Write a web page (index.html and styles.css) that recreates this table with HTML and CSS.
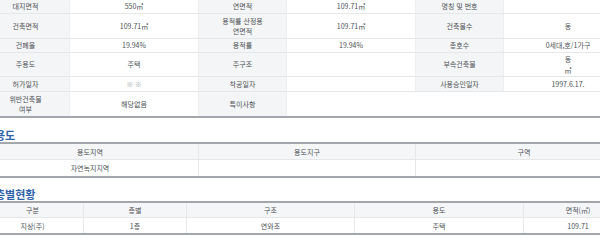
FILE: index.html
```html
<!DOCTYPE html>
<html lang="ko">
<head>
<meta charset="utf-8">
<link rel="stylesheet" href="styles.css">
</head>
<body>
<div class="page">
  <div class="info">
    <div class="th">대지면적</div><div class="td">550㎡</div><div class="th">연면적</div><div class="td">109.71㎡</div><div class="th">명칭 및 번호</div><div class="td"></div>
    <div class="th">건축면적</div><div class="td">109.71㎡</div><div class="th">용적률 산정용<br>연면적</div><div class="td">109.71㎡</div><div class="th">건축물수</div><div class="td">동</div>
    <div class="th">건폐율</div><div class="td">19.94%</div><div class="th">용적률</div><div class="td">19.94%</div><div class="th">총호수</div><div class="td">0세대,호/1가구</div>
    <div class="th">주용도</div><div class="td">주택</div><div class="th">주구조</div><div class="td"></div><div class="th">부속건축물</div><div class="td">동<br>㎡</div>
    <div class="th">허가일자</div><div class="td muted">※ ※</div><div class="th">착공일자</div><div class="td"></div><div class="th">사용승인일자</div><div class="td">1997.6.17.</div>
    <div class="th last">위반건축물<br>여부</div><div class="td last">해당없음</div><div class="th last">특이사항</div><div class="td last span3"></div>
  </div>

  <h2 class="title title-use">용도</h2>
  <div class="list use">
    <div class="hd">용도지역</div><div class="hd">용도지구</div><div class="hd">구역</div>
    <div class="cell">자연녹지지역</div><div class="cell"></div><div class="cell"></div>
  </div>

  <h2 class="title title-floor">층별현황</h2>
  <div class="list floor">
    <div class="hd">구분</div><div class="hd">층별</div><div class="hd">구조</div><div class="hd">용도</div><div class="hd">면적(㎡)</div>
    <div class="cell">지상(주)</div><div class="cell">1층</div><div class="cell">연와조</div><div class="cell">주택</div><div class="cell">109.71</div>
  </div>
</div>
</body>
</html>
```

FILE: styles.css
```css
html, body {
  margin: 0;
  padding: 0;
  background: #ffffff;
}

body {
  font-family: "Noto Sans CJK KR", "Noto Sans", sans-serif;
  font-size: 7px;
  color: #4d5156;
  overflow: hidden;
}

.page {
  width: 651px;
  margin-left: -19px;
}

.info {
  display: grid;
  grid-template-columns: 88px 129px 88px 129px 88px 129px;
  grid-template-rows: 14px 25px 14px 24px 15px 24px;
  border-bottom: 2px solid #a3a6ab;
}

.info .th,
.info .td {
  display: flex;
  align-items: center;
  justify-content: center;
  text-align: center;
  line-height: 10.5px;
  border-bottom: 1px solid #e6e7e9;
}

.info .th {
  background: #f4f5f7;
  border-left: 1px solid #eceef0;
}

.info .td {
  background: #ffffff;
  border-left: 1px solid #eceef0;
}

.info .last {
  border-bottom: 0;
}

.info .span3 {
  grid-column: span 3;
}

.info .muted {
  color: #a6a9ad;
}

.title {
  margin: 0;
  padding-left: 14px;
  font-size: 11px;
  line-height: 14px;
  font-weight: 700;
  color: #2f64aa;
}

.title-use {
  padding-top: 10px;
  height: 14px;
}

.title-floor {
  padding-top: 9px;
  height: 14px;
}

.list {
  display: grid;
  border-top: 2px solid #a3a6ab;
  border-bottom: 2px solid #a3a6ab;
}

.use {
  grid-template-columns: 217px 217px 217px;
  grid-template-rows: 16px 16px;
}

.floor {
  grid-template-columns: 102px 103px 168px 169px 109px;
  grid-template-rows: 15px 15px;
}

.list .hd,
.list .cell {
  display: flex;
  align-items: center;
  justify-content: center;
  border-left: 1px solid #e6e7e9;
}

.list .hd {
  background: #f5f6f8;
  border-bottom: 1px solid #e6e7e9;
}

.list .cell {
  background: #ffffff;
}
```
